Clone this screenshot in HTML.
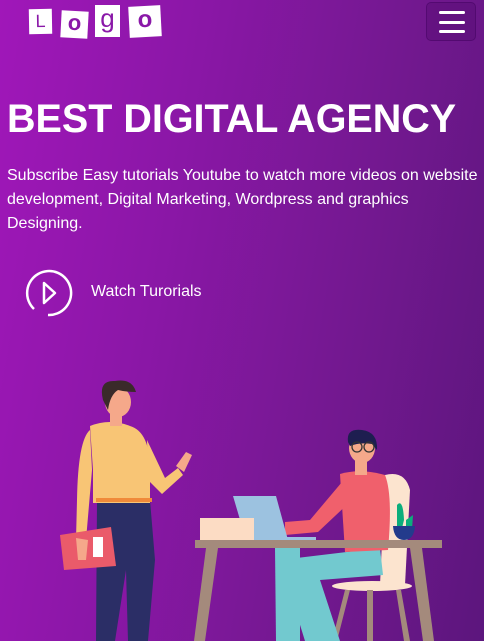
<!DOCTYPE html>
<html><head><style>
*{margin:0;padding:0;box-sizing:border-box}
body{width:484px;height:641px;overflow:hidden;background:linear-gradient(100deg,#a017b9 0%,#8a17a6 35%,#72188f 70%,#5c167d 100%);font-family:"Liberation Sans",sans-serif;color:#fff;position:relative}
.logo{position:absolute;left:29px;top:4px}
.logo div{position:absolute;background:#fff;color:#8a18a8;text-align:center}
.menu{position:absolute;left:426px;top:2px;width:50px;height:39px;border-radius:5px;background:rgba(80,10,110,.35);border:1px solid rgba(60,0,90,.4)}
.menu span{position:absolute;left:12px;width:26px;height:3px;border-radius:2px;background:#fff}
h1{position:absolute;left:7px;top:97px;font-size:39.5px;font-weight:bold;white-space:nowrap}
p{position:absolute;left:7px;top:164px;width:476px;font-size:16px;line-height:24px}
.watch{position:absolute;left:91px;top:283px;font-size:16px}
</style></head><body>
<div class="logo">
<div style="left:0;top:5px;width:23px;height:25px;font-size:18px;line-height:25px;transform:rotate(-1deg)">L</div>
<div style="left:32px;top:7px;width:27px;height:27px;font-size:22px;line-height:24px;transform:rotate(3deg);font-weight:bold">o</div>
<div style="left:66px;top:1px;width:25px;height:32px;font-size:26px;line-height:26px">g</div>
<div style="left:100px;top:2px;width:32px;height:31px;font-size:24px;line-height:28px;transform:rotate(-3deg);font-weight:bold">o</div>
</div>
<div class="menu"><span style="top:8px"></span><span style="top:18px"></span><span style="top:27px"></span></div>
<h1>BEST DIGITAL AGENCY</h1>
<p>Subscribe Easy tutorials Youtube to watch more videos on website development, Digital Marketing, Wordpress and graphics Designing.</p>
<svg style="position:absolute;left:0;top:0" width="484" height="641">
<path d="M34 309 A22 22 0 1 1 48 315" fill="none" stroke="#fff" stroke-width="2.5"/>
<path d="M44 283 L55 293 L44 303 Z" fill="none" stroke="#fff" stroke-width="2.5" stroke-linejoin="round"/>
<path d="M97 500 L150 500 L155 560 L148 641 L128 641 L126 570 L115 641 L96 641 Z" fill="#2b2e66"/>
<path d="M90 426 Q110 418 130 426 Q150 432 150 470 L150 503 L93 503 L93 470 Z" fill="#f8c575"/>
<path d="M90 430 Q78 440 77 500 L76 540 L86 540 L92 470 Z" fill="#f8c575"/>
<path d="M147 440 L165 478 L178 468 L183 475 L162 494 L148 480 Z" fill="#f8c575"/>
<path d="M176 466 L186 452 L192 455 L184 472 Z" fill="#f5a88a"/>
<rect x="96" y="498" width="56" height="4" fill="#f08a3a"/>
<path d="M60 535 L111 527 L116 566 L64 570 Z" fill="#ea5b6a"/>
<rect x="93" y="537" width="10" height="20" fill="#fff"/>
<path d="M76 538 L88 540 L86 560 L78 560 Z" fill="#f5a88a"/>
<rect x="110" y="410" width="12" height="16" fill="#f5a88a"/>
<ellipse cx="118" cy="402" rx="13" ry="15" fill="#f5a88a"/>
<path d="M103 400 Q98 380 115 381 Q132 378 136 392 Q126 392 118 390 Q110 395 108 410 Z" fill="#3a2a2a"/>
<path d="M206 548 L218 548 L205 641 L194 641 Z" fill="#a48a7c"/>
<path d="M410 548 L422 548 L434 641 L423 641 Z" fill="#a48a7c"/>
<path d="M385 475 Q405 470 410 490 L405 585 L380 585 Z" fill="#fce4cf"/>
<ellipse cx="372" cy="586" rx="40" ry="5" fill="#fce4cf"/>
<path d="M345 590 L350 590 L337 641 L332 641 Z M396 590 L401 590 L410 641 L404 641 Z M367 590 L373 590 L373 641 L367 641 Z" fill="#a48a7c"/>
<path d="M280 560 L380 548 L383 575 L320 580 L340 641 L305 641 Z" fill="#72c9cf"/>
<path d="M275 548 L300 548 L300 641 L276 641 Z" fill="#72c9cf"/>
<path d="M340 474 Q360 468 385 475 Q393 495 388 550 L345 552 Z" fill="#f0606c"/>
<path d="M342 482 L310 520 L285 522 L285 535 L318 532 L352 500 Z" fill="#f0606c"/>
<rect x="355" y="460" width="12" height="15" fill="#f5a88a"/>
<ellipse cx="362" cy="448" rx="13" ry="15" fill="#f5a88a"/>
<path d="M348 442 Q346 428 362 430 Q378 432 377 450 L372 444 Q360 442 350 446 Z" fill="#1e1e50"/>
<circle cx="357" cy="447" r="5" fill="none" stroke="#333" stroke-width="1.3"/>
<circle cx="369" cy="447" r="5" fill="none" stroke="#333" stroke-width="1.3"/>
<path d="M233 496 L276 496 L288 540 L246 540 Z" fill="#9cc2e0"/>
<rect x="246" y="537" width="70" height="4" fill="#9cc2e0"/>
<rect x="200" y="518" width="54" height="11" fill="#fcdcc4"/>
<rect x="200" y="529" width="54" height="12" fill="#fcdcc4"/>
<rect x="195" y="540" width="247" height="8" fill="#a48a7c"/>
<path d="M397 505 Q403 498 404 520 L402 528 L397 528 Z M406 520 L413 515 L412 530 L406 530 Z" fill="#0bae7c"/>
<path d="M393 526 L415 526 Q414 540 404 540 Q394 540 393 526 Z" fill="#233b8c"/>
</svg>
<div class="watch">Watch Turorials</div>
</body></html>
